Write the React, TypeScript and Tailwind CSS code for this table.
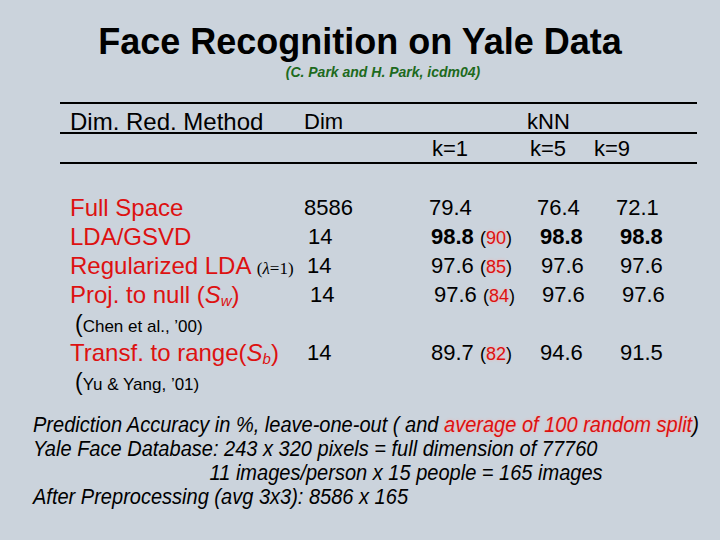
const red = "text-[#dd1111]";

const Paren = ({ n }: { n: string }) => (
  <span className="text-[18px] font-normal">
    (<span className={`${red} [text-shadow:0_0_3px_#f5b0b0]`}>{n}</span>)
  </span>
);

const Row = ({
  method,
  dim,
  k1,
  k5,
  k9,
}: {
  method: React.ReactNode;
  dim?: React.ReactNode;
  k1?: React.ReactNode;
  k5?: React.ReactNode;
  k9?: React.ReactNode;
}) => (
  <div className="flex h-[29px] items-center whitespace-nowrap">
    <div className="w-[244px] pl-[10px] text-[24px]">{method}</div>
    <div className="w-[125px]">{dim}</div>
    <div className="w-[108px]">{k1}</div>
    <div className="w-[79px]">{k5}</div>
    <div>{k9}</div>
  </div>
);

const Cite = ({ text }: { text: string }) => (
  <span className="text-black">
    <span className="text-[23px]">(</span>
    <span className="text-[17px]">{text}</span>
  </span>
);

export default function App() {
  return (
    <div className="w-[720px] h-[540px] bg-[#cbd3dc] text-black font-['Liberation_Sans',Arial,sans-serif] overflow-hidden">
      <h1 className="pt-[22px] text-center text-[36px] leading-[40px] font-bold">
        Face Recognition on Yale Data
      </h1>
      <p className="mt-[2px] pl-[46px] text-center text-[14px] leading-[16px] font-bold italic text-[#1d6a1d]">
        (C. Park and H. Park, icdm04)
      </p>

      <div className="mt-[22px] ml-[60px] w-[637px] text-[22px]">
        <div className="border-t-2 border-black flex h-[30px] items-end">
          <div className="w-[244px] pl-[10px] text-[24px] leading-[20px]">Dim. Red. Method</div>
          <div className="w-[125px] leading-[20px]">Dim</div>
          <div className="w-[108px]" />
          <div className="-ml-[10px] leading-[20px]">kNN</div>
        </div>
        <div className="border-t-2 border-black border-b-2 flex h-[32px] items-center">
          <div className="w-[244px]" />
          <div className="w-[125px]" />
          <div className="w-[101px] pl-[3px]">k=1</div>
          <div className="w-[64px]">k=5</div>
          <div>k=9</div>
        </div>

        <div className="pt-[29px]">
          <Row
            method={<span className={red}>Full Space</span>}
            dim="8586"
            k1="79.4"
            k5="76.4"
            k9="72.1"
          />
          <Row
            method={<span className={red}>LDA/GSVD</span>}
            dim={<span className="pl-[4px]">14</span>}
            k1={
              <span className="pl-[2px]">
                <b>98.8</b> <Paren n="90" />
              </span>
            }
            k5={<b className="pl-[3px]">98.8</b>}
            k9={<b className="pl-[4px]">98.8</b>}
          />
          <Row
            method={
              <span className={red}>
                Regularized LDA{" "}
                <span className="text-black text-[17px] font-['Liberation_Serif',serif]">
                  (<i>λ</i>=1)
                </span>
              </span>
            }
            dim={<span className="pl-[3px]">14</span>}
            k1={
              <span className="pl-[2px]">
                97.6 <Paren n="85" />
              </span>
            }
            k5={<span className="pl-[4px]">97.6</span>}
            k9={<span className="pl-[4px]">97.6</span>}
          />
          <Row
            method={
              <span className={red}>
                Proj. to null (<i>S</i>
                <sub className="text-[15px] italic">w</sub>)
              </span>
            }
            dim={<span className="pl-[6px]">14</span>}
            k1={
              <span className="pl-[5px]">
                97.6 <Paren n="84" />
              </span>
            }
            k5={<span className="pl-[5px]">97.6</span>}
            k9={<span className="pl-[6px]">97.6</span>}
          />
          <Row method={<span className="pl-[5px]"><Cite text="Chen et al., ’00)" /></span>} />
          <Row
            method={
              <span className={red}>
                Transf. to range(<i>S</i>
                <sub className="text-[15px] italic">b</sub>)
              </span>
            }
            dim={<span className="pl-[3px]">14</span>}
            k1={
              <span className="pl-[2px]">
                89.7 <Paren n="82" />
              </span>
            }
            k5={<span className="pl-[3px]">94.6</span>}
            k9={<span className="pl-[4px]">91.5</span>}
          />
          <Row method={<span className="pl-[5px]"><Cite text="Yu & Yang, ’01)" /></span>} />
        </div>
      </div>

      <div className="mt-[17px] pl-[33px] italic text-[22px] leading-[24px] whitespace-nowrap">
        <div className="origin-left scale-x-[0.91]">
          <div>
            Prediction Accuracy in %, leave-one-out ( and{" "}
            <span className={`${red} [text-shadow:0_0_3px_#f5b0b0]`}>average of 100 random split</span>)
          </div>
          <div>Yale Face Database: 243 x 320 pixels = full dimension of 77760</div>
          <div className="pl-[194px]">11 images/person x 15 people = 165 images</div>
          <div>After Preprocessing (avg 3x3): 8586 x 165</div>
        </div>
      </div>
    </div>
  );
}
